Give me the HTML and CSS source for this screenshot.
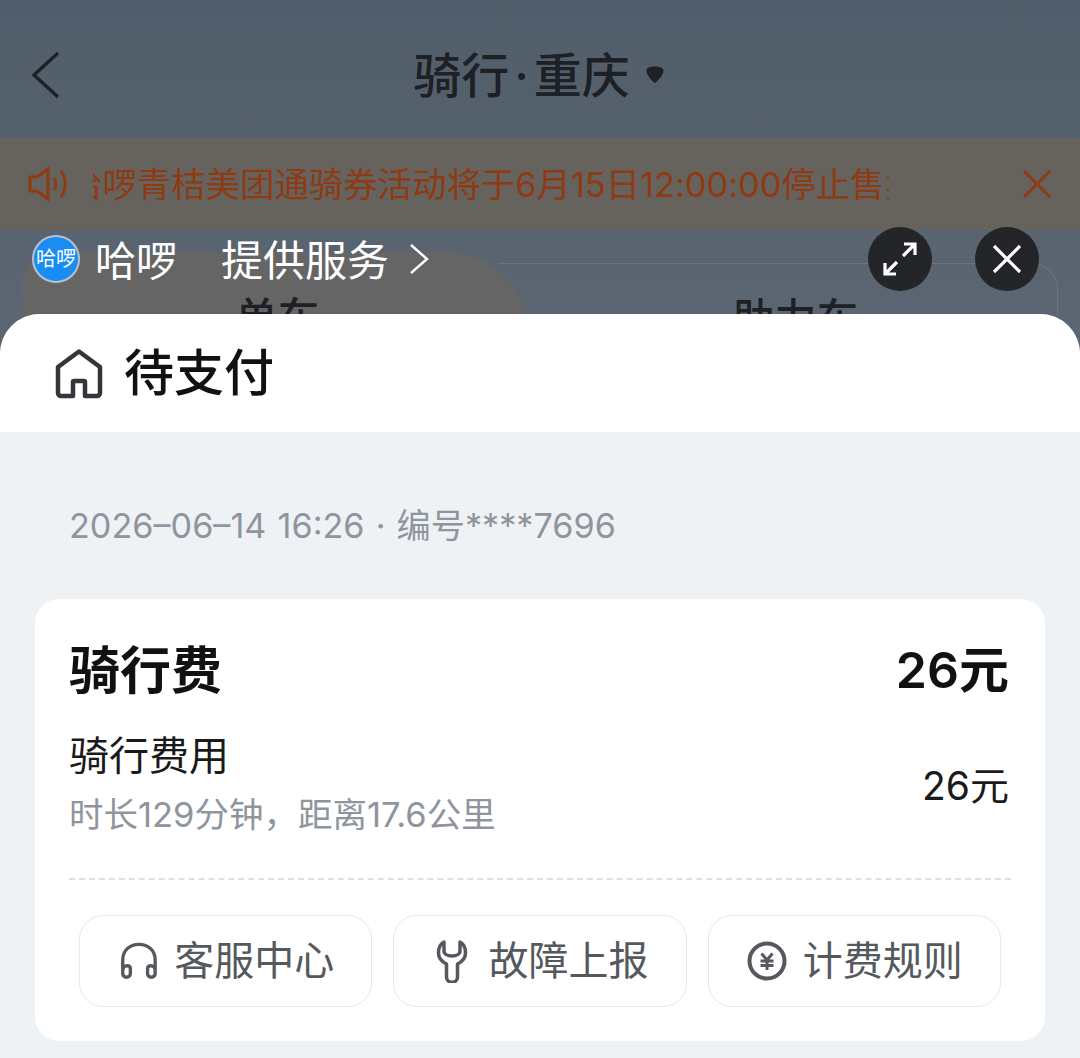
FILE: index.html
```html
<!DOCTYPE html>
<html lang="zh-CN">
<head>
<meta charset="utf-8">
<title>待支付</title>
<link rel="stylesheet" href="styles.css">
</head>
<body>
<div class="page">
  <div class="backdrop">
    <div class="tabs">
      <div class="tab tab-active"><span class="tab-label">单车</span></div>
      <div class="tab tab-other"><span class="tab-label">助力车</span></div>
    </div>
  </div>
  <header class="nav">
    <svg class="back" width="30" height="48" viewBox="0 0 30 48"><path d="M28 2 4 24l24 22" fill="none" stroke="#1d2024" stroke-width="3.4"/></svg>
    <div class="nav-title"><span>骑行<span class="nav-dot">·</span>重庆</span><svg class="nav-caret" width="20" height="20" viewBox="0 0 20 20"><path d="M1.500 5.500C1.500 2.800 5 1.500 9.800 1.500s8.700 1.300 8.700 4c0 4-5 10-8.700 12.500C6 15.500 1.500 9.500 1.500 5.500z" fill="#1d2024"/></svg></div>
  </header>
  <div class="notice">
    <svg class="speaker" width="41" height="36" viewBox="0 0 41 36" fill="none" stroke="#8e3a12" stroke-width="3"><path d="M2 11h7L20 3v30L9 25H2z"/><path d="M26 12c2.500 3.500 2.500 8.500 0 12"/><path d="M33 5c5.500 7.500 5.500 18.500 0 26"/></svg>
    <div class="notice-track"><span class="notice-text">哈啰青桔美团通骑券活动将于6月15日12:00:00停止售卖</span></div>
    <svg class="notice-close" width="30" height="30" viewBox="0 0 30 30" fill="none" stroke="#8e3a12" stroke-width="3"><path d="M2 2l26 26M28 2 2 28"/></svg>
  </div>
  <div class="provider">
    <div class="logo"><span class="logo-text">哈啰</span></div>
    <span class="provider-name">哈啰</span>
    <span class="provider-note">提供服务</span>
    <svg class="provider-arrow" width="20" height="32" viewBox="0 0 20 32"><path d="M2 2l16 14L2 30" fill="none" stroke="#fff" stroke-width="2.400"/></svg>
    <div class="round-actions">
      <div class="round-btn"><svg width="36" height="36" viewBox="0 0 36 36" fill="none" stroke="#fff" stroke-width="3.200"><path d="M21 15 33 3M22 3h11v11M15 21 3 33M3 22v11h11"/></svg></div>
      <div class="round-btn"><svg width="30" height="30" viewBox="0 0 30 30" fill="none" stroke="#fff" stroke-width="3.200"><path d="M2 2l26 26M28 2 2 28"/></svg></div>
    </div>
  </div>
  <main class="sheet">
    <div class="sheet-head">
      <svg class="home" width="48" height="50" viewBox="0 0 48 50" fill="none" stroke="#33363a" stroke-width="4.500" stroke-linejoin="round"><path d="M3 18 24 2.500 45 18v26a3 3 0 0 1-3 3H30V33a1 1 0 0 0-1-1H19a1 1 0 0 0-1 1v14H6a3 3 0 0 1-3-3z"/></svg>
      <h1 class="sheet-title">待支付</h1>
    </div>
    <div class="sheet-body">
      <p class="meta">2026–06–14 16:26 · 编号****7696</p>
      <section class="card">
        <div class="fee-head"><span class="fee-title">骑行费</span><span class="fee-total">26元</span></div>
        <div class="fee-row">
          <div class="fee-info">
            <div class="fee-name">骑行费用</div>
            <div class="fee-desc">时长129分钟，距离17.6公里</div>
          </div>
          <div class="fee-amount">26元</div>
        </div>
        <div class="divider"></div>
        <div class="actions">
          <div class="action">
            <svg width="42" height="42" viewBox="-2 -1 44 44" fill="none" stroke="#55595e" stroke-width="3.500"><path d="M4 30V20C4 10 11 3.500 21 3.500S38 10 38 20v10"/><path d="M4 31c0-3 2-5 4.500-5S12 27.500 12 29v5c0 2-1.500 4-4 4s-4-2-4-4zM38 31c0-3-2-5-4.500-5S30 27.500 30 29v5c0 2 1.500 4 4 4s4-2 4-4z"/></svg>
            <span class="action-label">客服中心</span>
          </div>
          <div class="action">
            <svg width="42" height="44" viewBox="0 0 42 44" fill="none" stroke="#55595e" stroke-width="3.500" stroke-linejoin="round"><path d="M13 3C9 5 7.500 9 7.500 14c0 5 3 8.500 8 11v13c0 7 11 7 11 0V25c5-2.500 8-6 8-11 0-5-1.500-9-5.500-11v9c0 3-3.500 5-8 5s-8-2-8-5z"/></svg>
            <span class="action-label">故障上报</span>
          </div>
          <div class="action">
            <svg width="42" height="42" viewBox="0 0 42 42" fill="none" stroke="#55595e"><circle cx="21" cy="21" r="17.500" stroke-width="4"/><path d="M15.500 13.500l5.500 6.500 5.500-6.500M14.500 21h13M14.500 25.500h13M21 20v10" stroke-width="3"/></svg>
            <span class="action-label">计费规则</span>
          </div>
        </div>
      </section>
    </div>
  </main>
</div>
</body>
</html>
```
FILE: styles.css
```css
* { box-sizing: border-box; }
html, body { margin: 0; padding: 0; }
body { font-family: "Inter", "Noto Sans CJK SC", sans-serif; }
.page {
  position: relative;
  width: 1080px;
  height: 1058px;
  overflow: hidden;
  display: flex;
  flex-direction: column;
  background: linear-gradient(#515d6a, #5c6672 320px);
}
.backdrop { position: absolute; left: 22px; right: 22px; top: 253px; height: 100px; }
.tabs { display: flex; height: 100%; }
.tab { text-align: center; }
.tab-active {
  flex: 0 0 506px;
  padding-top: 44px;
  padding-left: 5px;
  background: #656566;
  border-radius: 30px 80px 0 0;
}
.tab-other {
  flex: 1;
  margin-top: 10px;
  margin-left: -30px;
  padding-top: 34px;
  padding-left: 36px;
  border-top: 1px solid #6b747e;
  border-right: 1px solid #6b747e;
  border-radius: 0 26px 0 0;
}
.tab-label { font-size: 42px; font-weight: 500; color: #1d2024; line-height: 1; }
.nav {
  position: relative;
  height: 138px;
  flex: none;
  display: flex;
  align-items: center;
  justify-content: center;
  padding-top: 14px;
}
.back { position: absolute; left: 30px; top: 51px; }
.nav-title {
  display: flex;
  align-items: center;
  gap: 15px;
  margin-left: -2px;
  font-size: 48px;
  font-weight: 500;
  color: #1d2024;
  line-height: 1;
}
.nav-dot { margin: 0 5px; }
.nav-caret { margin-top: -2px; }
.notice {
  height: 92px;
  flex: none;
  display: flex;
  align-items: center;
  padding: 0 28px;
  background: #66635f;
  position: relative;
}
.speaker { flex: none; }
.notice-track { flex: none; width: 796px; margin-left: 24px; overflow: hidden; white-space: nowrap; }
.notice-text { display: block; margin: 2px 0 0 -25px; font-size: 34.500px; letter-spacing: -0.100px; color: #8e3a12; line-height: 1.2; }
.notice-close { margin-left: auto; margin-right: 0; }
.provider {
  position: relative;
  height: 84px;
  flex: none;
  display: flex;
  align-items: center;
  padding: 0 41px 26px 32px;
  color: #fff;
}
.logo {
  width: 48px;
  height: 48px;
  border-radius: 50%;
  background: #1a8df5;
  border: 2px solid #b9c2cc;
  display: flex;
  align-items: center;
  justify-content: center;
  overflow: hidden;
}
.logo-text { font-size: 20px; line-height: 1; color: #fff; white-space: nowrap; }
.provider-name { margin: 4px 0 0 15px; font-size: 41px; line-height: 1; }
.provider-note { margin: 4px 0 0 44px; font-size: 42px; line-height: 1; }
.provider-arrow { margin-left: 20px; }
.round-actions { margin-left: auto; display: flex; gap: 43px; }
.round-btn {
  width: 64px;
  height: 64px;
  border-radius: 50%;
  background: #232528;
  display: flex;
  align-items: center;
  justify-content: center;
}
.sheet {
  position: relative;
  flex: 1;
  display: flex;
  flex-direction: column;
  background: #eff2f5;
  border-radius: 40px 40px 0 0;
  overflow: hidden;
}
.sheet-head {
  height: 118px;
  flex: none;
  background: #fff;
  display: flex;
  align-items: center;
  padding-left: 55px;
  gap: 21px;
}
.home { margin-top: 2px; }
.sheet-title { margin: 0; font-size: 50px; font-weight: 500; color: #111; line-height: 1; }
.sheet-body { padding: 72px 35px 0; }
.meta { margin: 0 0 0 34px; font-size: 34.200px; word-spacing: 1.500px; line-height: 44px; color: #8f959c; white-space: nowrap; }
.card {
  margin-top: 51px;
  height: 442px;
  background: #fff;
  border-radius: 24px;
  padding: 36px 34px 0;
}
.fee-head { display: flex; justify-content: space-between; align-items: center; height: 70px; }
.fee-title { font-size: 51px; font-weight: 700; color: #111; line-height: 1; }
.fee-total { font-size: 50px; font-weight: 600; color: #111; line-height: 1; margin-right: 2px; }
.fee-row { display: flex; justify-content: space-between; align-items: center; margin-top: 22px; }
.fee-name { font-size: 40px; color: #1a1a1a; line-height: 58px; }
.fee-desc { font-size: 34.500px; color: #8f959c; line-height: 58px; margin-top: 1px; white-space: nowrap; }
.fee-amount { font-size: 39px; color: #1a1a1a; line-height: 1; margin-right: 2px; }
.divider { margin-top: 34px; border-top: 2px dashed #dcdfe3; }
.actions { display: flex; gap: 21px; padding: 35px 10px 0; }
.action {
  flex: 1;
  height: 92px;
  border: 1px solid #e6e8eb;
  border-radius: 24px;
  display: flex;
  align-items: center;
  justify-content: center;
  gap: 15px;
  font-size: 40px;
  color: #55595e;
}
.action-label { margin-bottom: 6px; }
```
